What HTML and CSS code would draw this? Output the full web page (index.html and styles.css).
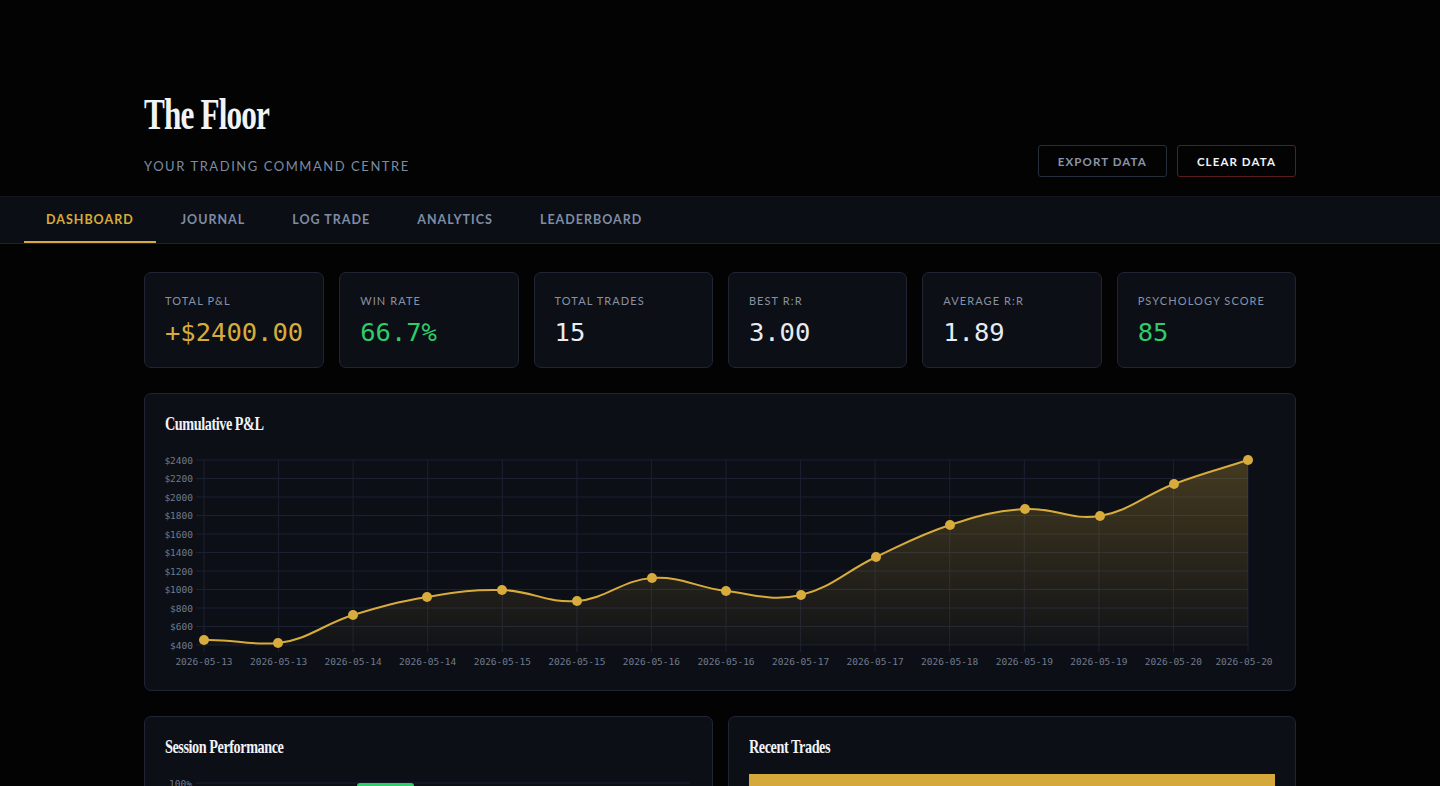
FILE: index.html
```html
<!DOCTYPE html>
<html lang="en">

<head>
    <meta charset="UTF-8">
    <meta name="viewport" content="width=device-width, initial-scale=1.0">
    <title>The Floor</title>
    <link rel="stylesheet" href="styles.css">
</head>

<body>
    <!-- Header -->
    <header class="header">
        <div class="brand">
            <h1>The Floor</h1>
            <p class="tagline">Your Trading Command Centre</p>
        </div>
        <div class="header-actions">
            <button class="btn btn-ghost">Export Data</button>
            <button class="btn btn-danger">Clear Data</button>
        </div>
    </header>

    <!-- Tabs -->
    <nav class="tabs">
        <a class="tab active">Dashboard</a>
        <a class="tab">Journal</a>
        <a class="tab">Log Trade</a>
        <a class="tab">Analytics</a>
        <a class="tab">Leaderboard</a>
    </nav>

    <main class="main">
        <!-- Stat Cards -->
        <section class="stats">
            <div class="stat-card">
                <div class="stat-label">Total P&amp;L</div>
                <div class="stat-value gold">+$2400.00</div>
            </div>
            <div class="stat-card">
                <div class="stat-label">Win Rate</div>
                <div class="stat-value green">66.7%</div>
            </div>
            <div class="stat-card">
                <div class="stat-label">Total Trades</div>
                <div class="stat-value">15</div>
            </div>
            <div class="stat-card">
                <div class="stat-label">Best R:R</div>
                <div class="stat-value">3.00</div>
            </div>
            <div class="stat-card">
                <div class="stat-label">Average R:R</div>
                <div class="stat-value">1.89</div>
            </div>
            <div class="stat-card">
                <div class="stat-label">Psychology Score</div>
                <div class="stat-value green">85</div>
            </div>
        </section>

        <!-- Cumulative P&L -->
        <section class="panel">
            <h2 class="panel-title">Cumulative P&amp;L</h2>
            <svg class="pnl-chart" viewBox="165 448 1110 222" width="1110" height="222">
                <defs>
                    <linearGradient id="pnlFill" x1="0" y1="0" x2="0" y2="1">
                        <stop offset="0" stop-color="#d4a83a" stop-opacity="0.28" />
                        <stop offset="1" stop-color="#d4a83a" stop-opacity="0.03" />
                    </linearGradient>
                </defs>

                <!-- grid -->
                <g class="grid">
                    <line x1="196" y1="460" x2="1248" y2="460" />
                    <line x1="196" y1="478.5" x2="1248" y2="478.5" />
                    <line x1="196" y1="497" x2="1248" y2="497" />
                    <line x1="196" y1="515.5" x2="1248" y2="515.5" />
                    <line x1="196" y1="534" x2="1248" y2="534" />
                    <line x1="196" y1="552.5" x2="1248" y2="552.5" />
                    <line x1="196" y1="571" x2="1248" y2="571" />
                    <line x1="196" y1="589.5" x2="1248" y2="589.5" />
                    <line x1="196" y1="608" x2="1248" y2="608" />
                    <line x1="196" y1="626.5" x2="1248" y2="626.5" />
                    <line x1="196" y1="645" x2="1248" y2="645" />

                    <line x1="204" y1="460" x2="204" y2="652" />
                    <line x1="278.6" y1="460" x2="278.6" y2="652" />
                    <line x1="353.1" y1="460" x2="353.1" y2="652" />
                    <line x1="427.7" y1="460" x2="427.7" y2="652" />
                    <line x1="502.3" y1="460" x2="502.3" y2="652" />
                    <line x1="576.9" y1="460" x2="576.9" y2="652" />
                    <line x1="651.4" y1="460" x2="651.4" y2="652" />
                    <line x1="726" y1="460" x2="726" y2="652" />
                    <line x1="800.6" y1="460" x2="800.6" y2="652" />
                    <line x1="875.1" y1="460" x2="875.1" y2="652" />
                    <line x1="949.7" y1="460" x2="949.7" y2="652" />
                    <line x1="1024.3" y1="460" x2="1024.3" y2="652" />
                    <line x1="1098.9" y1="460" x2="1098.9" y2="652" />
                    <line x1="1173.4" y1="460" x2="1173.4" y2="652" />
                    <line x1="1248" y1="460" x2="1248" y2="652" />
                </g>

                <!-- y axis -->
                <g class="axis y-axis">
                    <text x="193" y="463.5">$2400</text>
                    <text x="193" y="482">$2200</text>
                    <text x="193" y="500.5">$2000</text>
                    <text x="193" y="519">$1800</text>
                    <text x="193" y="537.5">$1600</text>
                    <text x="193" y="556">$1400</text>
                    <text x="193" y="574.5">$1200</text>
                    <text x="193" y="593">$1000</text>
                    <text x="193" y="611.5">$800</text>
                    <text x="193" y="630">$600</text>
                    <text x="193" y="648.5">$400</text>
                </g>

                <!-- x axis -->
                <g class="axis x-axis">
                    <text x="204" y="665">2026-05-13</text>
                    <text x="278.6" y="665">2026-05-13</text>
                    <text x="353.1" y="665">2026-05-14</text>
                    <text x="427.7" y="665">2026-05-14</text>
                    <text x="502.3" y="665">2026-05-15</text>
                    <text x="576.9" y="665">2026-05-15</text>
                    <text x="651.4" y="665">2026-05-16</text>
                    <text x="726" y="665">2026-05-16</text>
                    <text x="800.6" y="665">2026-05-17</text>
                    <text x="875.1" y="665">2026-05-17</text>
                    <text x="949.7" y="665">2026-05-18</text>
                    <text x="1024.3" y="665">2026-05-19</text>
                    <text x="1098.9" y="665">2026-05-19</text>
                    <text x="1173.4" y="665">2026-05-20</text>
                    <text x="1244" y="665">2026-05-20</text>
                </g>

                <!-- area + line -->
                <path class="area" d="M204,640 C233.6,638.8 248.2,646 278,643 C307.8,640 323.2,624.2 353,615 C382.8,605.8 397.2,602 427,597 C456.8,592 472,589.2 502,590 C532,590.8 547,603.4 577,601 C607,598.6 622.2,580 652,578 C681.8,576 696.2,587.6 726,591 C755.8,594.4 771,601.8 801,595 C831,588.2 846.2,571 876,557 C905.8,543 920.2,534.6 950,525 C979.8,515.4 995,510.8 1025,509 C1055,507.2 1070.2,521 1100,516 C1129.8,511 1144.4,495.2 1174,484 C1203.6,472.8 1218.4,469.6 1248,460 L1248,645 L204,645 Z" />
                <path class="line" d="M204,640 C233.6,638.8 248.2,646 278,643 C307.8,640 323.2,624.2 353,615 C382.8,605.8 397.2,602 427,597 C456.8,592 472,589.2 502,590 C532,590.8 547,603.4 577,601 C607,598.6 622.2,580 652,578 C681.8,576 696.2,587.6 726,591 C755.8,594.4 771,601.8 801,595 C831,588.2 846.2,571 876,557 C905.8,543 920.2,534.6 950,525 C979.8,515.4 995,510.8 1025,509 C1055,507.2 1070.2,521 1100,516 C1129.8,511 1144.4,495.2 1174,484 C1203.6,472.8 1218.4,469.6 1248,460" />

                <g class="dots">
                    <circle cx="204" cy="640" r="5" />
                    <circle cx="278" cy="643" r="5" />
                    <circle cx="353" cy="615" r="5" />
                    <circle cx="427" cy="597" r="5" />
                    <circle cx="502" cy="590" r="5" />
                    <circle cx="577" cy="601" r="5" />
                    <circle cx="652" cy="578" r="5" />
                    <circle cx="726" cy="591" r="5" />
                    <circle cx="801" cy="595" r="5" />
                    <circle cx="876" cy="557" r="5" />
                    <circle cx="950" cy="525" r="5" />
                    <circle cx="1025" cy="509" r="5" />
                    <circle cx="1100" cy="516" r="5" />
                    <circle cx="1174" cy="484" r="5" />
                    <circle cx="1248" cy="460" r="5" />
                </g>
            </svg>
        </section>

        <!-- Bottom row -->
        <section class="two-col">
            <div class="panel">
                <h2 class="panel-title">Session Performance</h2>
                <svg class="session-chart" viewBox="165 776 527 200" width="527" height="200">
                    <g class="grid">
                        <line x1="196" y1="783" x2="690" y2="783" />
                        <line x1="196" y1="823" x2="690" y2="823" />
                        <line x1="196" y1="863" x2="690" y2="863" />
                        <line x1="196" y1="903" x2="690" y2="903" />
                    </g>
                    <g class="axis y-axis">
                        <text x="192" y="786.5">100%</text>
                        <text x="192" y="826.5">75%</text>
                        <text x="192" y="866.5">50%</text>
                        <text x="192" y="906.5">25%</text>
                    </g>
                    <rect class="bar-green" x="357" y="783" width="57" height="160" rx="3" />
                </svg>
            </div>
            <div class="panel">
                <h2 class="panel-title">Recent Trades</h2>
                <table class="trades">
                    <thead>
                        <tr>
                            <th>Date</th>
                            <th>Pair</th>
                            <th>Direction</th>
                            <th>R:R</th>
                            <th>P&amp;L</th>
                        </tr>
                    </thead>
                    <tbody>
                        <tr>
                            <td>2026-05-20</td>
                            <td>EURUSD</td>
                            <td>Long</td>
                            <td>2.00</td>
                            <td>+$260.00</td>
                        </tr>
                    </tbody>
                </table>
            </div>
        </section>
    </main>
</body>

</html>
```

FILE: styles.css
```css
/* General Body Styling */
body {
    font-family: 'Lato', 'Noto Sans', sans-serif;
    background-color: #030303;
    color: #e8edf5;
    margin: 0;
    padding: 0;
}

/* Header */
.header {
    width: 1152px;
    margin: 0 auto;
    padding: 92px 0 20px;
    display: flex;
    justify-content: space-between;
    align-items: flex-end;
}

.header h1 {
    font-family: 'Liberation Serif', serif;
    font-size: 44px;
    font-weight: 700;
    letter-spacing: -1.2px;
    line-height: 46px;
    margin: 0;
    color: #f1f3f7;
    transform: scaleX(0.71);
    transform-origin: left center;
}

.tagline {
    margin: 20px 0 2px;
    font-size: 13px;
    letter-spacing: 1.55px;
    text-transform: uppercase;
    color: #7d8ba3;
    line-height: 16px;
}

.header-actions {
    display: flex;
    gap: 10px;
    margin-bottom: -1px;
}

.btn {
    font-family: 'Lato', sans-serif;
    font-size: 11.5px;
    font-weight: 700;
    letter-spacing: 1.1px;
    text-transform: uppercase;
    background: transparent;
    border-radius: 3px;
    height: 32px;
    padding: 0 19px;
    cursor: pointer;
}

.btn-ghost {
    border: 1px solid #262d3b;
    color: #8a95a8;
}

.btn-danger {
    border: 1px solid #5a1d1d;
    color: #eef1f6;
}

/* Tabs */
.tabs {
    display: flex;
    gap: 3px;
    padding: 0 24px;
    height: 46px;
    background-color: #0b0e14;
    border-top: 1px solid #10141c;
    border-bottom: 1px solid #1b2130;
}

.tab {
    display: flex;
    align-items: center;
    padding: 0 22px;
    font-size: 12.5px;
    font-weight: 700;
    letter-spacing: 1px;
    text-transform: uppercase;
    color: #7f8ca3;
    border-bottom: 2px solid transparent;
    cursor: pointer;
}

.tab.active {
    color: #d8ac3c;
    border-bottom-color: #d8ac3c;
}

/* Main */
.main {
    width: 1152px;
    margin: 0 auto;
    padding: 28px 0 40px;
}

.stats {
    display: grid;
    grid-template-columns: repeat(6, 1fr);
    gap: 15px;
}

.stat-card {
    background-color: #0c0f16;
    border: 1px solid #1f2533;
    border-radius: 7px;
    padding: 20px;
}

.stat-label {
    font-size: 11px;
    letter-spacing: 1.1px;
    text-transform: uppercase;
    color: #8892a4;
    line-height: 16px;
}

.stat-value {
    margin-top: 8px;
    font-family: 'DejaVu Sans Mono', monospace;
    font-size: 25.5px;
    line-height: 30px;
    color: #e6ebf4;
}

.stat-value.gold {
    color: #d8ac3c;
}

.stat-value.green {
    color: #2ecc6a;
}

/* Panels */
.panel {
    margin-top: 25px;
    background-color: #0c0f16;
    border: 1px solid #1f2533;
    border-radius: 7px;
    padding: 20px;
    overflow: hidden;
}

.panel-title {
    font-family: 'Liberation Serif', serif;
    font-size: 19px;
    font-weight: 700;
    letter-spacing: -0.6px;
    line-height: 20px;
    margin: 0 0 14px;
    color: #f1f3f7;
    transform: scaleX(0.75);
    transform-origin: left center;
}

.pnl-chart,
.session-chart {
    display: block;
}

.grid line {
    stroke: #1b2130;
    stroke-width: 1;
}

.axis text {
    font-family: 'DejaVu Sans Mono', monospace;
    font-size: 9.5px;
    fill: #717b8d;
}

.y-axis text {
    text-anchor: end;
}

.x-axis text {
    text-anchor: middle;
}

.area {
    fill: url(#pnlFill);
}

.line {
    fill: none;
    stroke: #d8ac3c;
    stroke-width: 2;
}

.dots circle {
    fill: #d8ac3c;
}

.bar-green {
    fill: #2ecc6a;
}

.two-col {
    display: grid;
    grid-template-columns: 1fr 1fr;
    gap: 15px;
}

.two-col .panel {
    height: 300px;
}

.two-col .panel-title {
    margin-bottom: 19px;
}

.two-col .panel:last-child .panel-title {
    margin-bottom: 17px;
}

.trades {
    width: 100%;
    border-collapse: collapse;
}

.trades th {
    background-color: #d4a83a;
    color: #0b0e14;
    font-size: 11px;
    letter-spacing: 1px;
    text-transform: uppercase;
    text-align: left;
    padding: 12px 12px;
}

.trades td {
    padding: 12px;
    font-size: 13px;
    color: #c9d1de;
    border-bottom: 1px solid #1b2130;
}
```
